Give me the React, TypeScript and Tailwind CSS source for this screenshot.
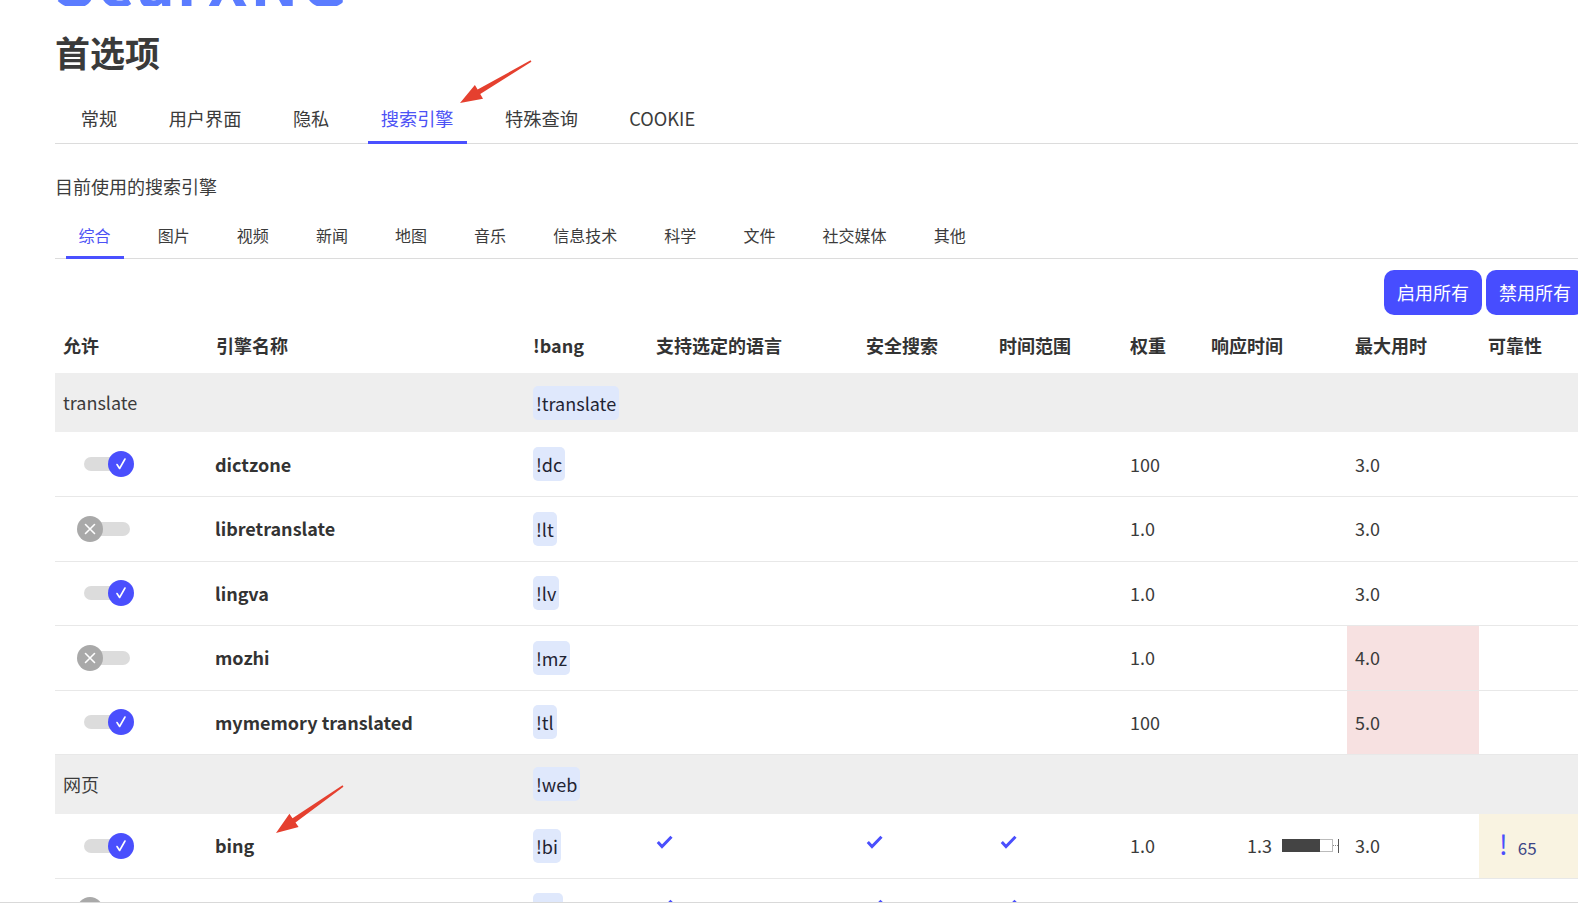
import React from 'react';

type Engine = {
  name: string;
  bang: string;
  on: boolean;
  lang?: boolean;
  safe?: boolean;
  time?: boolean;
  weight: string;
  resp?: string;
  max: string;
  slow?: boolean;
  rel?: string;
};

type Group = { title: string; bang: string; engines: Engine[] };

const groups: Group[] = [
  {
    title: 'translate',
    bang: '!translate',
    engines: [
      { name: 'dictzone', bang: '!dc', on: true, weight: '100', max: '3.0' },
      { name: 'libretranslate', bang: '!lt', on: false, weight: '1.0', max: '3.0' },
      { name: 'lingva', bang: '!lv', on: true, weight: '1.0', max: '3.0' },
      { name: 'mozhi', bang: '!mz', on: false, weight: '1.0', max: '4.0', slow: true },
      { name: 'mymemory translated', bang: '!tl', on: true, weight: '100', max: '5.0', slow: true },
    ],
  },
  {
    title: '网页',
    bang: '!web',
    engines: [
      { name: 'bing', bang: '!bi', on: true, lang: true, safe: true, time: true, weight: '1.0', resp: '1.3', max: '3.0', rel: '65' },
      { name: 'brave', bang: '!br', on: false, lang: true, safe: true, time: true, weight: '1.0', max: '3.0' },
    ],
  },
];

const tabs = ['常规', '用户界面', '隐私', '搜索引擎', '特殊查询', 'COOKIE'];
const categories = ['综合', '图片', '视频', '新闻', '地图', '音乐', '信息技术', '科学', '文件', '社交媒体', '其他'];
const headers = ['允许', '引擎名称', '!bang', '支持选定的语言', '安全搜索', '时间范围', '权重', '响应时间', '最大用时', '可靠性'];

const Toggle = ({ on }: { on: boolean }) => (
  <div className="relative ml-[14px] w-[58px] h-[26px]">
    <div className="absolute left-[7px] top-[6px] w-[46px] h-[14px] rounded-full bg-[#dcdcdc]" />
    {on ? (
      <div className="absolute left-[31px] top-0 w-[26px] h-[26px] rounded-full bg-[#4a4ffd] flex items-center justify-center">
        <svg width="26" height="26" viewBox="0 0 26 26" fill="none">
          <path d="M9 13.5 L11.6 17.5 L17 8" stroke="white" strokeWidth="1.6" strokeLinecap="round" strokeLinejoin="round" />
        </svg>
      </div>
    ) : (
      <div className="absolute left-0 top-0 w-[26px] h-[26px] rounded-full bg-[#a9a9a9] flex items-center justify-center">
        <svg width="26" height="26" viewBox="0 0 26 26" fill="none">
          <path d="M8.5 8.5 L17.5 17.5 M17.5 8.5 L8.5 17.5" stroke="white" strokeWidth="1.6" strokeLinecap="round" />
        </svg>
      </div>
    )}
  </div>
);

const Check = () => (
  <svg width="17" height="14" viewBox="0 0 17 14" fill="none" className="-mt-[8px]">
    <path d="M1.8 7 L6 11.5 L15.5 1.8" stroke="#4a4ffd" strokeWidth="3" strokeLinejoin="miter" />
  </svg>
);

const Bang = ({ text }: { text: string }) => (
  <span className="inline-block rounded-[5px] bg-[#dfe8fc] px-[3px] py-[4px] leading-[26px] text-[#1f2433]">{text}</span>
);

// red annotation arrow, polygon computed from tail/tip
const arrowPoints = (x1: number, y1: number, x2: number, y2: number) => {
  const dx = x2 - x1;
  const dy = y2 - y1;
  const len = Math.hypot(dx, dy);
  const ux = dx / len;
  const uy = dy / len;
  const nx = -uy;
  const ny = ux;
  const bx = x2 - ux * 22;
  const by = y2 - uy * 22;
  const pts = [
    [x1 + nx * 0.8, y1 + ny * 0.8],
    [bx + nx * 2.6, by + ny * 2.6],
    [bx + nx * 8, by + ny * 8],
    [x2, y2],
    [bx - nx * 8, by - ny * 8],
    [bx - nx * 2.6, by - ny * 2.6],
    [x1 - nx * 0.8, y1 - ny * 0.8],
  ];
  return pts.map(p => p.join(',')).join(' ');
};

const App: React.FC = () => {
  return (
    <div className="relative w-full h-[904px] overflow-hidden bg-white text-[#3b3b3b] font-['Noto_Sans_CJK_SC',sans-serif]">
      <div className="ml-[55px] w-[1529px]">
        {/* logo, scrolled mostly out of view */}
        <div className="h-[6px] overflow-hidden">
          <div className="-mt-[53px] text-[65px] leading-none font-bold text-[#5b7cff] tracking-[2px]">SearXNG</div>
        </div>

        <h1 className="mt-[24px] text-[35px] leading-[44px] font-bold text-[#3a3a3a]">首选项</h1>

        <div className="mt-[22px] flex h-[48px] border-b border-[#dcdcdc]">
          {tabs.map(t => (
            <div
              key={t}
              className={
                t === '搜索引擎'
                  ? 'mx-[12.75px] px-[13px] flex items-center text-[18.2px] text-[#4c52f5] border-b-[3px] border-[#4a50ff] -mb-px'
                  : 'mx-[12.75px] px-[13px] flex items-center text-[18.2px] pb-[2px]'
              }
            >
              {t}
            </div>
          ))}
        </div>

        <div className="mt-[29px] text-[18px] leading-[26px]">目前使用的搜索引擎</div>

        <div className="mt-[16px] flex h-[44px] border-b border-[#dcdcdc]">
          {categories.map(c => (
            <div
              key={c}
              className={
                c === '综合'
                  ? 'mx-[10.55px] px-[13px] flex items-center text-[16px] text-[#4c52f5] border-b-[3px] border-[#4a50ff] -mb-px pb-[1px]'
                  : 'mx-[10.55px] px-[13px] flex items-center text-[16px] pb-[3px]'
              }
            >
              {c}
            </div>
          ))}
        </div>

        <div className="mt-[11px] flex justify-end gap-[4px]">
          <button className="h-[45px] px-[13px] rounded-[10px] bg-[#474dff] text-white text-[18px]">启用所有</button>
          <button className="h-[45px] px-[13px] rounded-[10px] bg-[#474dff] text-white text-[18px]">禁用所有</button>
        </div>

        <table className="mt-[3px] w-[1529px] table-fixed border-collapse text-[18px]">
          <colgroup>
            <col className="w-[153px]" />
            <col className="w-[317px]" />
            <col className="w-[123px]" />
            <col className="w-[210px]" />
            <col className="w-[133px]" />
            <col className="w-[131px]" />
            <col className="w-[81px]" />
            <col className="w-[144px]" />
            <col className="w-[132px]" />
            <col className="w-[105px]" />
          </colgroup>
          <thead>
            <tr className="h-[55px]">
              {headers.map((h, i) => (
                <th key={h} className={i === 9 ? 'pl-[9px] text-left font-bold text-[#333]' : 'pl-[8px] text-left font-bold text-[#333]'}>
                  {h}
                </th>
              ))}
            </tr>
          </thead>
          <tbody>
            {groups.map(g => (
              <React.Fragment key={g.title}>
                <tr className="h-[59px] bg-[#eeeeee]">
                  <td colSpan={2} className="pl-[8px]">{g.title}</td>
                  <td className="pl-[8px]"><Bang text={g.bang} /></td>
                  <td colSpan={7} />
                </tr>
                {g.engines.map(e => (
                  <tr key={e.name} className="h-[64.5px] border-b border-[#e8e8e8]">
                    <td className="pl-[8px]"><Toggle on={e.on} /></td>
                    <td className="pl-[7px] font-bold text-[18px] text-[#333]">{e.name}</td>
                    <td className="pl-[8px]"><Bang text={e.bang} /></td>
                    <td className="pl-[8px]">{e.lang && <Check />}</td>
                    <td className="pl-[8px]">{e.safe && <Check />}</td>
                    <td className="pl-[9px]">{e.time && <Check />}</td>
                    <td className="pl-[8px]">{e.weight}</td>
                    <td className="pr-[8px]">
                      {e.resp && (
                        <div className="flex items-center justify-end">
                          <span className="mr-[10px]">{e.resp}</span>
                          <div className="w-[38px] h-[13px] bg-[#444]" />
                          <div className="w-[13px] h-[13px] border border-l-0 border-[#bbb]" />
                          <div className="w-[5px] border-t border-dotted border-[#888]" />
                          <div className="w-px h-[14px] bg-[#555]" />
                        </div>
                      )}
                    </td>
                    <td className={e.slow ? 'pl-[8px] bg-[#f7e1e1]' : 'pl-[8px]'}>{e.max}</td>
                    <td className={e.rel ? 'pl-[20px] bg-[#f9f3e1]' : 'pl-[9px]'}>
                      {e.rel && (
                        <div className="flex items-baseline">
                          <span className="text-[27px] leading-none text-[#4a4ffd]">!</span>
                          <span className="ml-[10px] text-[17px] text-[#3c4585]">{e.rel}</span>
                        </div>
                      )}
                    </td>
                  </tr>
                ))}
              </React.Fragment>
            ))}
          </tbody>
        </table>
      </div>

      {/* annotation arrows */}
      <svg className="absolute left-0 top-0 pointer-events-none" width="1578" height="904">
        <polygon points={arrowPoints(531, 61, 460, 103)} fill="#e5402f" />
        <polygon points={arrowPoints(343, 786, 276, 833)} fill="#e5402f" />
      </svg>

      {/* bottom scrollbar edge */}
      <div className="absolute left-0 bottom-0 w-full h-[2px] bg-white border-t border-[#d9d9d9]" />
    </div>
  );
};

export default App;
